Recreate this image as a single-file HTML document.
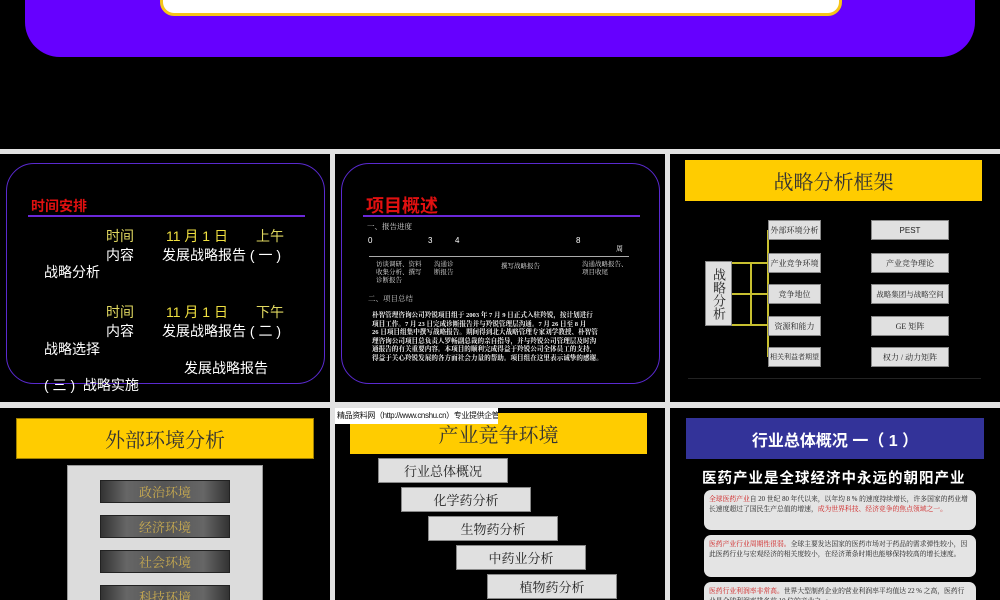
<!DOCTYPE html>
<html style="width:1000px;height:600px;overflow:hidden"><head><meta charset="utf-8"><style>
*{margin:0;padding:0;box-sizing:border-box}
body{width:1000px;height:600px;background:#000;position:relative;overflow:hidden;font-family:"Liberation Sans","Noto Sans CJK SC",sans-serif}
.a{position:absolute}
.sep{position:absolute;background:#e2e2e2}
.t{position:absolute;white-space:nowrap;color:#fff}
.serif{font-family:"Liberation Serif","Noto Serif CJK SC",serif}
.gb{position:absolute;background:#e0e0e0;border:1px solid #888;color:#222;font-family:"Liberation Serif","Noto Serif CJK SC",serif;display:flex;align-items:center;justify-content:center;white-space:nowrap}
.btn{position:absolute;left:100px;width:130px;height:23px;background:linear-gradient(90deg,#333,#666 20%,#555 50%,#666 80%,#333);border:1px solid #222;color:#c8aa50;font-family:"Liberation Serif","Noto Serif CJK SC",serif;font-size:13px;display:flex;align-items:center;justify-content:center}
</style></head><body>
<div class="a" style="left:25px;top:-40px;width:950px;height:97px;background:#6600ff;border-radius:0 0 35px 35px"></div>
<div class="a" style="left:160px;top:-20px;width:682px;height:36px;background:#fff;border:3px solid #f5c518;border-radius:0 0 14px 14px"></div>
<div class="sep" style="left:0;top:149px;width:1000px;height:5px"></div>
<div class="sep" style="left:0;top:402px;width:1000px;height:6px"></div>
<div class="sep" style="left:330px;top:149px;width:5px;height:451px"></div>
<div class="sep" style="left:665px;top:149px;width:5px;height:451px"></div>

<div class="a" style="left:6px;top:163px;width:319px;height:221px;border:1.5px solid #5a2ad0;border-radius:28px"></div>
<div class="t" style="left:31px;top:196px;color:#e01010;font-size:14px;font-weight:bold">时间安排</div>
<div class="a" style="left:28px;top:215px;width:277px;height:2px;background:#6a28d8"></div>
<div class="t" style="left:106px;top:226px;font-size:14px;color:#e0d860">时间</div>
<div class="t" style="left:166px;top:226px;font-size:14px;color:#f0e040">11 月 1 日</div>
<div class="t" style="left:256px;top:226px;font-size:14px;color:#e0d860">上午</div>
<div class="t" style="left:106px;top:245px;font-size:14px">内容</div>
<div class="t" style="left:162px;top:245px;font-size:14px">发展战略报告 ( 一 )</div>
<div class="t" style="left:44px;top:262px;font-size:14px">战略分析</div>
<div class="t" style="left:106px;top:302px;font-size:14px;color:#e0d860">时间</div>
<div class="t" style="left:166px;top:302px;font-size:14px;color:#f0e040">11 月 1 日</div>
<div class="t" style="left:256px;top:302px;font-size:14px;color:#e0d860">下午</div>
<div class="t" style="left:106px;top:321px;font-size:14px">内容</div>
<div class="t" style="left:162px;top:321px;font-size:14px">发展战略报告 ( 二 )</div>
<div class="t" style="left:44px;top:339px;font-size:14px">战略选择</div>
<div class="t" style="left:184px;top:358px;font-size:14px">发展战略报告</div>
<div class="t" style="left:44px;top:375px;font-size:14px">( 三 )&nbsp; 战略实施</div>

<div class="a" style="left:341px;top:163px;width:319px;height:221px;border:1.5px solid #5a2ad0;border-radius:28px"></div>
<div class="t" style="left:366px;top:192px;color:#e01010;font-size:18px;font-weight:bold">项目概述</div>
<div class="a" style="left:363px;top:215px;width:277px;height:2px;background:#6a28d8"></div>
<div class="t serif" style="left:367px;top:221px;font-size:7.5px;color:#ddd">一、报告进度</div>
<div class="t" style="left:368px;top:236px;font-size:8px">0</div>
<div class="t" style="left:428px;top:236px;font-size:8px">3</div>
<div class="t" style="left:455px;top:236px;font-size:8px">4</div>
<div class="t" style="left:576px;top:236px;font-size:8px">8</div>
<div class="t serif" style="left:616px;top:244px;font-size:7px">周</div>
<div class="a" style="left:369px;top:256px;width:260px;height:1px;background:#aaa"></div>
<div class="t serif" style="left:376px;top:261px;font-size:6.5px;line-height:8px;color:#ddd">访谈调研、资料<br>收集分析、撰写<br>诊断报告</div>
<div class="t serif" style="left:434px;top:261px;font-size:6.5px;line-height:8px;color:#ddd">沟通诊<br>断报告</div>
<div class="t serif" style="left:501px;top:261px;font-size:6.5px;color:#ddd">撰写战略报告</div>
<div class="t serif" style="left:582px;top:261px;font-size:6.5px;line-height:8px;color:#ddd">沟通战略报告、<br>项目收尾</div>
<div class="t serif" style="left:368px;top:293px;font-size:7.5px;color:#ccc">二、项目总结</div>
<div class="t serif" style="left:372px;top:312px;font-size:6.6px;line-height:8.6px;color:#eee;font-weight:bold">朴智管理咨询公司羚锐项目组于 2003 年 7 月 9 日正式入驻羚锐，按计划进行<br>项目工作。7 月 23 日完成诊断报告并与羚锐管理层沟通。7 月 26 日至 8 月<br>26 日项目组集中撰写战略报告。期间得到北大战略管理专家刘学教授、朴智管<br>理咨询公司项目总负责人罗畅副总裁的亲自指导，并与羚锐公司管理层及时沟<br>通报告的有关重要内容。本项目的顺利完成得益于羚锐公司全体员工的支持，<br>得益于关心羚锐发展的各方面社会力量的帮助。项目组在这里表示诚挚的感谢。</div>

<div class="a" style="left:685px;top:160px;width:297px;height:41px;background:#ffcc00;display:flex;align-items:center;justify-content:center;font-size:20px;color:#333;font-family:'Liberation Serif','Noto Serif CJK SC',serif">战略分析框架</div>
<div class="a" style="left:730px;top:262px;width:21px;height:2px;background:#c8c030"></div>
<div class="a" style="left:730px;top:293px;width:38px;height:2px;background:#c8c030"></div>
<div class="a" style="left:730px;top:324px;width:21px;height:2px;background:#c8c030"></div>
<div class="a" style="left:750px;top:262px;width:2px;height:64px;background:#c8c030"></div>
<div class="a" style="left:750px;top:262px;width:18px;height:2px;background:#c8c030"></div>
<div class="a" style="left:750px;top:324px;width:18px;height:2px;background:#c8c030"></div>
<div class="a" style="left:767px;top:230px;width:2px;height:127px;background:#c8c030"></div>
<div class="gb" style="left:705px;top:261px;width:27px;height:65px;font-size:13px;writing-mode:vertical-rl">战略分析</div>
<div class="gb" style="left:768px;top:220px;width:53px;height:20px;font-size:8px">外部环境分析</div>
<div class="gb" style="left:768px;top:253px;width:53px;height:20px;font-size:8px">产业竞争环境</div>
<div class="gb" style="left:768px;top:284px;width:53px;height:20px;font-size:8px">竞争地位</div>
<div class="gb" style="left:768px;top:316px;width:53px;height:20px;font-size:8px">资源和能力</div>
<div class="gb" style="left:768px;top:347px;width:53px;height:20px;font-size:7px">相关利益者期望</div>
<div class="gb" style="left:871px;top:220px;width:78px;height:20px;font-size:8px;font-family:'Liberation Sans',sans-serif">PEST</div>
<div class="gb" style="left:871px;top:253px;width:78px;height:20px;font-size:8px">产业竞争理论</div>
<div class="gb" style="left:871px;top:284px;width:78px;height:20px;font-size:7.5px">战略集团与战略空间</div>
<div class="gb" style="left:871px;top:316px;width:78px;height:20px;font-size:8px">GE 矩阵</div>
<div class="gb" style="left:871px;top:347px;width:78px;height:20px;font-size:8px">权力 / 动力矩阵</div>
<div class="a" style="left:688px;top:378px;width:293px;height:1px;background:#222"></div>

<div class="a" style="left:16px;top:418px;width:298px;height:41px;background:#ffcc00;border:1px solid #a08000;display:flex;align-items:center;justify-content:center;font-size:20px;color:#333;font-family:'Liberation Serif','Noto Serif CJK SC',serif">外部环境分析</div>
<div class="a" style="left:67px;top:465px;width:196px;height:140px;background:#dcdcdc;border:1px solid #999"></div>
<div class="btn" style="top:480px">政治环境</div>
<div class="btn" style="top:515px">经济环境</div>
<div class="btn" style="top:550px">社会环境</div>
<div class="btn" style="top:585px">科技环境</div>

<div class="a" style="left:350px;top:413px;width:297px;height:41px;background:#ffcc00;display:flex;align-items:center;justify-content:center;font-size:20px;color:#333;font-family:'Liberation Serif','Noto Serif CJK SC',serif">产业竞争环境</div>
<div class="t" style="left:335px;top:408px;width:163px;height:16px;background:#fff;color:#111;font-size:8px;line-height:16px;padding-left:2px;overflow:hidden;letter-spacing:-0.4px">精品资料网（http://www.cnshu.cn）专业提供企管培训资料</div>
<div class="gb" style="left:378px;top:458px;width:130px;height:25px;font-size:13px">行业总体概况</div>
<div class="gb" style="left:401px;top:487px;width:130px;height:25px;font-size:13px">化学药分析</div>
<div class="gb" style="left:428px;top:516px;width:130px;height:25px;font-size:13px">生物药分析</div>
<div class="gb" style="left:456px;top:545px;width:130px;height:25px;font-size:13px">中药业分析</div>
<div class="gb" style="left:487px;top:574px;width:130px;height:25px;font-size:13px">植物药分析</div>

<div class="a" style="left:686px;top:418px;width:298px;height:41px;background:#333399;display:flex;align-items:center;justify-content:center;font-size:16px;color:#fff;font-weight:bold">行业总体概况 一（ 1 ）</div>
<div class="t" style="left:702px;top:467px;font-size:14.5px;font-weight:bold;letter-spacing:1px">医药产业是全球经济中永远的朝阳产业</div>
<div class="a serif" style="left:704px;top:490px;width:272px;height:40px;background:#e4e4e4;border-radius:7px;padding:5px 5px;font-size:6.8px;line-height:10px;color:#222;overflow:hidden"><span style="color:#d02020">全球医药产业</span>自 20 世纪 80 年代以来，以年均 8 % 的速度持续增长，许多国家的药业增长速度超过了国民生产总值的增速，<span style="color:#d02020">成为世界科技、经济竞争的焦点领域之一。</span></div>
<div class="a serif" style="left:704px;top:535px;width:272px;height:42px;background:#e4e4e4;border-radius:7px;padding:5px 5px;font-size:6.8px;line-height:10px;color:#222;overflow:hidden"><span style="color:#d02020">医药产业行业周期性很弱。</span>全球主要发达国家的医药市场对于药品的需求弹性较小，因此医药行业与宏观经济的相关度较小，在经济萧条时期也能够保持较高的增长速度。</div>
<div class="a serif" style="left:704px;top:582px;width:272px;height:18px;background:#e4e4e4;border-radius:7px 7px 0 0;padding:5px 5px;font-size:6.8px;line-height:10px;color:#222;overflow:hidden"><span style="color:#d02020">医药行业利润率非常高。</span>世界大型制药企业的营业利润率平均值达 22 % 之高，医药行业是全球利润率排名前 10 位的产业之一。</div>
</body></html>
